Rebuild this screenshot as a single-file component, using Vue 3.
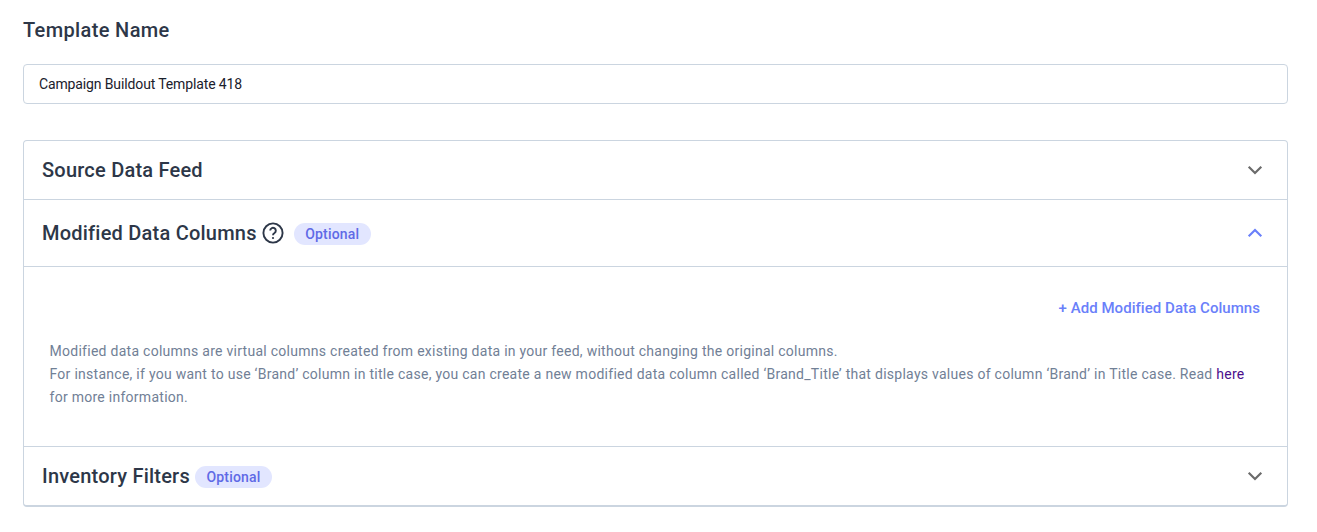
<script setup>
const intro = 'Modified data columns are virtual columns created from existing data in your feed, without changing the original columns.';
</script>

<template>
  <div class="page">
    <div class="label">Template Name</div>
    <div class="field">Campaign Buildout Template 418</div>
    <div class="card">
      <div class="section-head first">
        <div class="title-row"><span class="title">Source Data Feed</span></div>
        <svg class="chev" viewBox="0 0 24 24"><path d="M5.7 8.8L12 15l6.3-6.2" /></svg>
      </div>
      <div class="section-head second">
        <div class="title-row">
          <span class="title">Modified Data Columns</span>
          <svg class="help" viewBox="0 0 24 24">
            <circle cx="12" cy="12" r="9.6" />
            <path d="M9.2 9.6a2.8 2.8 0 1 1 4.3 2.4c-1 .6-1.5 1.1-1.5 2.2" />
            <circle class="dot" cx="12" cy="17" r="1.1" />
          </svg>
          <span class="badge badge-wide">Optional</span>
        </div>
        <svg class="chev up" viewBox="0 0 24 24"><path d="M5.7 15.2L12 9l6.3 6.2" /></svg>
      </div>
      <div class="body">
        <div class="actions"><span class="add">+ Add Modified Data Columns</span></div>
        <p class="desc">
          {{ intro }}<br />
          For instance, if you want to use ‘Brand’ column in title case, you can create a new modified data column called ‘Brand_Title’ that displays values of column ‘Brand’ in Title case. Read <a class="link">here</a> for more information.
        </p>
      </div>
      <div class="section-head third">
        <div class="title-row">
          <span class="title">Inventory Filters</span>
          <span class="badge badge-tight">Optional</span>
        </div>
        <svg class="chev" viewBox="0 0 24 24"><path d="M5.7 8.8L12 15l6.3-6.2" /></svg>
      </div>
    </div>
  </div>
</template>

<style>
html, body { margin: 0; background: #fff; }
</style>

<style scoped>
.page {
  width: 1265px;
  padding: 19px 29px 0 23px;
  font-family: Roboto, "Liberation Sans", sans-serif;
  color: #2d3748;
}
.label {
  font-size: 20px;
  font-weight: 500;
  line-height: 22px;
  letter-spacing: 0.36px;
}
.field {
  margin-top: 23px;
  height: 38px;
  line-height: 38px;
  padding-left: 15px;
  border: 1px solid #cbd5e0;
  border-radius: 4px;
  font-size: 14px;
  letter-spacing: -0.13px;
  color: #1a202c;
}
.card {
  margin-top: 36px;
  border: 1px solid #cbd5e0;
  border-bottom-width: 2px;
  border-radius: 4px;
}
.section-head {
  display: flex;
  align-items: center;
  justify-content: space-between;
  padding: 0 20px 0 18px;
}
.first { height: 58px; border-bottom: 1px solid #cbd5e0; }
.second { height: 66px; border-bottom: 1px solid #cbd5e0; }
.third { height: 58px; }
.title-row { display: flex; align-items: center; }
.title {
  font-size: 20px;
  font-weight: 500;
  letter-spacing: 0.22px;
  line-height: 24px;
}
.help {
  width: 24px;
  height: 24px;
  margin-left: 4px;
  fill: none;
  stroke: #2d3748;
  stroke-width: 1.9;
}
.help .dot { fill: #2d3748; stroke: none; }
.badge {
  display: inline-block;
  height: 22px;
  margin-top: 2px;
  line-height: 23px;
  padding: 0 11.5px;
  border-radius: 11px;
  background: #e2e6ff;
  color: #5f6ae6;
  font-size: 14px;
  font-weight: 500;
  letter-spacing: 0.2px;
}
.badge-wide { margin-left: 9px; }
.badge-tight { margin-left: 5px; }
.chev {
  width: 24px;
  height: 24px;
  fill: none;
  stroke: #6b6b6b;
  stroke-width: 2.2;
}
.chev.up { stroke: #6a80fa; }
.body {
  padding: 30px 27px 37px 25.5px;
  border-bottom: 1px solid #cbd5e0;
}
.actions { display: flex; justify-content: flex-end; }
.add {
  color: #6a80fa;
  font-size: 15px;
  font-weight: 500;
  letter-spacing: 0.05px;
  line-height: 22px;
}
.desc {
  margin: 21px 0 0;
  font-size: 14px;
  letter-spacing: 0.27px;
  line-height: 23px;
  color: #718096;
}
.link { color: #4b0f8c; }
</style>
